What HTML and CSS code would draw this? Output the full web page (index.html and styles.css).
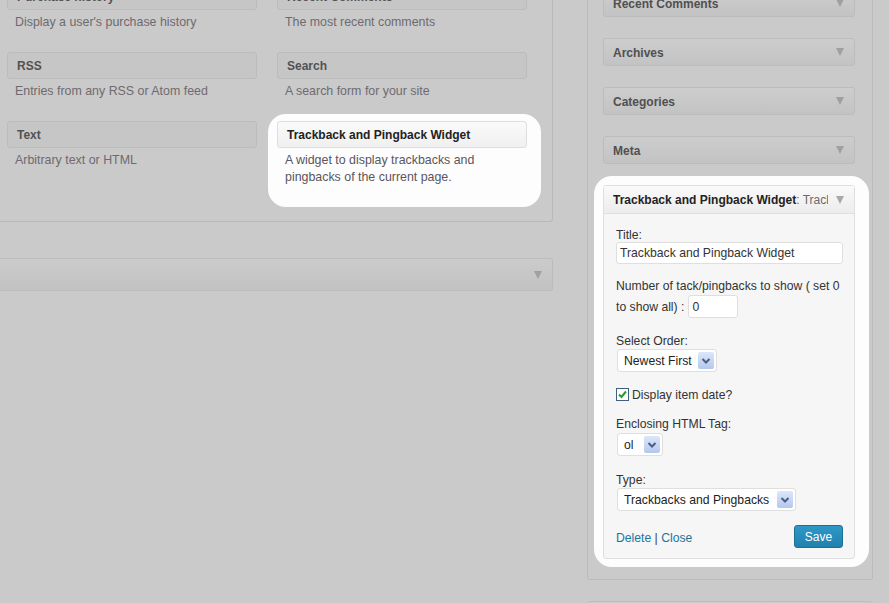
FILE: index.html
```html
<!DOCTYPE html>
<html>
<head>
<meta charset="utf-8">
<link rel="stylesheet" href="styles.css">
</head>
<body>
<div class="page">
  <div class="main">
    <div class="panel">
      <div class="grid">
        <div class="item"><div class="item-title">Purchase history</div><div class="item-desc">Display a user's purchase history</div></div>
        <div class="item"><div class="item-title">Recent Comments</div><div class="item-desc">The most recent comments</div></div>
        <div class="item"><div class="item-title">RSS</div><div class="item-desc">Entries from any RSS or Atom feed</div></div>
        <div class="item"><div class="item-title">Search</div><div class="item-desc">A search form for your site</div></div>
        <div class="item"><div class="item-title">Text</div><div class="item-desc">Arbitrary text or HTML</div></div>
        <div class="item hl"><div class="item-title">Trackback and Pingback Widget</div><div class="item-desc">A widget to display trackbacks and<br>pingbacks of the current page.</div></div>
      </div>
    </div>
    <div class="bar main-bar"><span class="tri"></span></div>
  </div>
  <div class="side">
    <div class="sidebar">
      <div class="wbar first"><span class="wname">Recent Comments</span><span class="tri"></span></div>
      <div class="wbar"><span class="wname">Archives</span><span class="tri"></span></div>
      <div class="wbar"><span class="wname">Categories</span><span class="tri"></span></div>
      <div class="wbar"><span class="wname">Meta</span><span class="tri"></span></div>
      <div class="hl-wrap">
        <div class="widget">
          <div class="w-head"><span class="w-title"><b>Trackback and Pingback Widget</b><span class="in-title">: Trackback and Pingback Widget</span></span><span class="tri light"></span></div>
          <div class="w-body">
            <div class="label">Title:</div>
            <div class="input wide">Trackback and Pingback Widget</div>

            <div class="group g-num">
              <div class="label">Number of tack/pingbacks to show ( set 0</div>
              <div class="row"><span>to show all) :</span><span class="input small">0</span></div>
            </div>

            <div class="group g-order">
              <div class="label">Select Order:</div>
              <div class="select s-order"><span>Newest First</span><span class="sel-btn"><svg width="16" height="17" viewBox="0 0 16 17"><path d="M4.5 7 L8 10.5 L11.5 7" fill="none" stroke="#4b5f86" stroke-width="2"/></svg></span></div>
            </div>

            <div class="group g-check">
              <span class="check"><svg width="11" height="11" viewBox="0 0 11 11"><path d="M2 5.5 L4.5 8 L9 2.5" fill="none" stroke="#2a9a2a" stroke-width="2"/></svg></span><span>Display item date?</span>
            </div>

            <div class="group g-tag">
              <div class="label">Enclosing HTML Tag:</div>
              <div class="select s-tag"><span>ol</span><span class="sel-btn"><svg width="16" height="17" viewBox="0 0 16 17"><path d="M4.5 7 L8 10.5 L11.5 7" fill="none" stroke="#4b5f86" stroke-width="2"/></svg></span></div>
            </div>

            <div class="group g-type">
              <div class="label">Type:</div>
              <div class="select s-type"><span>Trackbacks and Pingbacks</span><span class="sel-btn"><svg width="16" height="17" viewBox="0 0 16 17"><path d="M4.5 7 L8 10.5 L11.5 7" fill="none" stroke="#4b5f86" stroke-width="2"/></svg></span></div>
            </div>

            <div class="footer">
              <span class="links"><a class="lnk">Delete</a> | <a class="lnk">Close</a></span>
              <span class="save">Save</span>
            </div>
          </div>
        </div>
      </div>
    </div>
    <div class="bar side-bar"></div>
  </div>
</div>
</body>
</html>
```

FILE: styles.css
```css
html, body {
  margin: 0;
  padding: 0;
}
body {
  background: #cacaca;
  font-family: "Liberation Sans", Arial, sans-serif;
  font-size: 12px;
  width: 889px;
  height: 603px;
  overflow: hidden;
}
.page {
  display: flex;
  align-items: flex-start;
}
.main {
  width: 553px;
  flex: none;
}
.panel {
  border-right: 1px solid #b9b9b9;
  border-bottom: 1px solid #b9b9b9;
  border-bottom-right-radius: 3px;
  padding: 0 0 35px 7px;
}
.grid {
  display: grid;
  grid-template-columns: 250px 250px;
  column-gap: 20px;
  row-gap: 21px;
  margin-top: -17px;
}
.item-title {
  height: 25px;
  line-height: 27px;
  border: 1px solid #bcbcbc;
  border-radius: 3px;
  background: #c6c6c6;
  padding: 0 9px;
  font-weight: bold;
  font-size: 12px;
  color: #525252;
  overflow: hidden;
}
.item-desc {
  margin-top: 4px;
  line-height: 17px;
  font-size: 12.4px;
  color: #6e6a70;
  padding-left: 8px;
}
.item.hl {
  padding: 7px 14px 21px 9px;
  margin: -7px -14px -21px -9px;
  background: #fdfdfd;
  border-radius: 18px;
}
.item.hl .item-title {
  background: linear-gradient(#fafafa, #f0f0f0);
  border-color: #dedede;
  color: #222;
  padding-left: 9px;
}
.item.hl .item-desc {
  color: #5a5560;
}
.bar {
  border: 1px solid #bcbcbc;
  border-radius: 3px;
  background: linear-gradient(#cbcbcb, #c2c2c2);
}
.main-bar {
  margin-top: 36px;
  height: 31px;
  border-left: none;
  border-top-left-radius: 0;
  border-bottom-left-radius: 0;
  display: flex;
  align-items: center;
  justify-content: flex-end;
  padding-right: 10px;
}
.tri {
  width: 0;
  height: 0;
  border-left: 4px solid transparent;
  border-right: 4px solid transparent;
  border-top: 8px solid #a0a0a0;
  flex: none;
}
.tri.light {
  border-top-color: #a9a9a9;
}
.side {
  margin-left: 34px;
  width: 286px;
  flex: none;
}
.sidebar {
  border-left: 1px solid #bbbbbb;
  border-right: 1px solid #bbbbbb;
  border-bottom: 1px solid #bbbbbb;
  border-bottom-left-radius: 3px;
  border-bottom-right-radius: 3px;
  padding: 0 17px 20px 15px;
}
.wbar {
  height: 26px;
  border: 1px solid #bcbcbc;
  border-radius: 3px;
  background: linear-gradient(#cdcdcd, #c3c3c3);
  margin-bottom: 21px;
  display: flex;
  align-items: center;
  justify-content: space-between;
  padding: 0 10px 0 9px;
}
.wbar.first {
  margin-top: -11px;
}
.wname {
  font-weight: bold;
  font-size: 12px;
  color: #505050;
  padding-top: 2px;
}
.hl-wrap {
  padding: 9px 14px 8px 9px;
  margin: -9px -14px -8px -9px;
  background: #fdfdfd;
  border-radius: 18px;
}
.widget {
  border: 1px solid #dfdfdf;
  border-radius: 3px;
  background: #f6f6f6;
}
.w-head {
  height: 27px;
  border-bottom: 1px solid #dfdfdf;
  background: linear-gradient(#fafafa, #ececec);
  display: flex;
  align-items: center;
  padding: 0 10px 0 9px;
  gap: 8px;
}
.w-title {
  flex: 1;
  white-space: nowrap;
  overflow: hidden;
  font-size: 12px;
  color: #222;
  padding-top: 1px;
}
.in-title {
  color: #6a6a6a;
}
.w-body {
  padding: 11px 11px 10px 12px;
  font-size: 12.2px;
  color: #333;
}
.label {
  line-height: 20px;
  margin-bottom: -3px;
  white-space: nowrap;
}
.input {
  box-sizing: border-box;
  background: #fff;
  border: 1px solid #dfdfdf;
  border-radius: 3px;
  color: #333;
  display: flex;
  align-items: center;
}
.input.wide {
  height: 22px;
  padding-left: 3px;
}
.group {
  margin-top: 12px;
}
.g-num .label {
  line-height: 21px;
  margin-bottom: -4px;
}
.row {
  display: flex;
  align-items: center;
  gap: 4px;
  margin-top: 2px;
  white-space: nowrap;
}
.input.small {
  width: 50px;
  height: 23px;
  padding-left: 3px;
}
.g-order {
  margin-top: 13px;
}
.select {
  box-sizing: border-box;
  height: 23px;
  background: #fff;
  border: 1px solid #dfdfdf;
  border-radius: 3px;
  display: flex;
  align-items: center;
  justify-content: space-between;
  padding: 0 2px 0 6px;
  margin-left: 1px;
  margin-top: 1px;
  color: #222;
  white-space: nowrap;
}
.sel-btn {
  width: 16px;
  height: 17px;
  border-radius: 2px;
  background: linear-gradient(#dce7fa, #b5c7ec);
  display: flex;
}
.s-order { width: 100px; }
.s-tag { width: 46px; margin-top: 2px; }
.s-type { width: 179px; }
.g-check {
  margin-top: 14px;
  display: flex;
  align-items: center;
  height: 17px;
  gap: 3px;
}
.g-tag {
  margin-top: 11px;
}
.check {
  box-sizing: border-box;
  width: 13px;
  height: 13px;
  border: 1px solid #3f5e80;
  background: #fff;
  display: flex;
  align-items: center;
  justify-content: center;
}
.g-type {
  margin-top: 14px;
}
.footer {
  margin-top: 14px;
  display: flex;
  align-items: center;
  justify-content: space-between;
  height: 23px;
}
.links {
  color: #444;
  padding-top: 3px;
}
.lnk {
  color: #21759b;
  text-decoration: none;
}
.save {
  box-sizing: border-box;
  width: 49px;
  height: 23px;
  border: 1px solid #1f6f95;
  border-radius: 3px;
  background: linear-gradient(#2e98c8, #2180ad);
  color: #fff;
  font-size: 12px;
  display: flex;
  align-items: center;
  justify-content: center;
}
.side-bar {
  margin-top: 21px;
  height: 30px;
}
```
